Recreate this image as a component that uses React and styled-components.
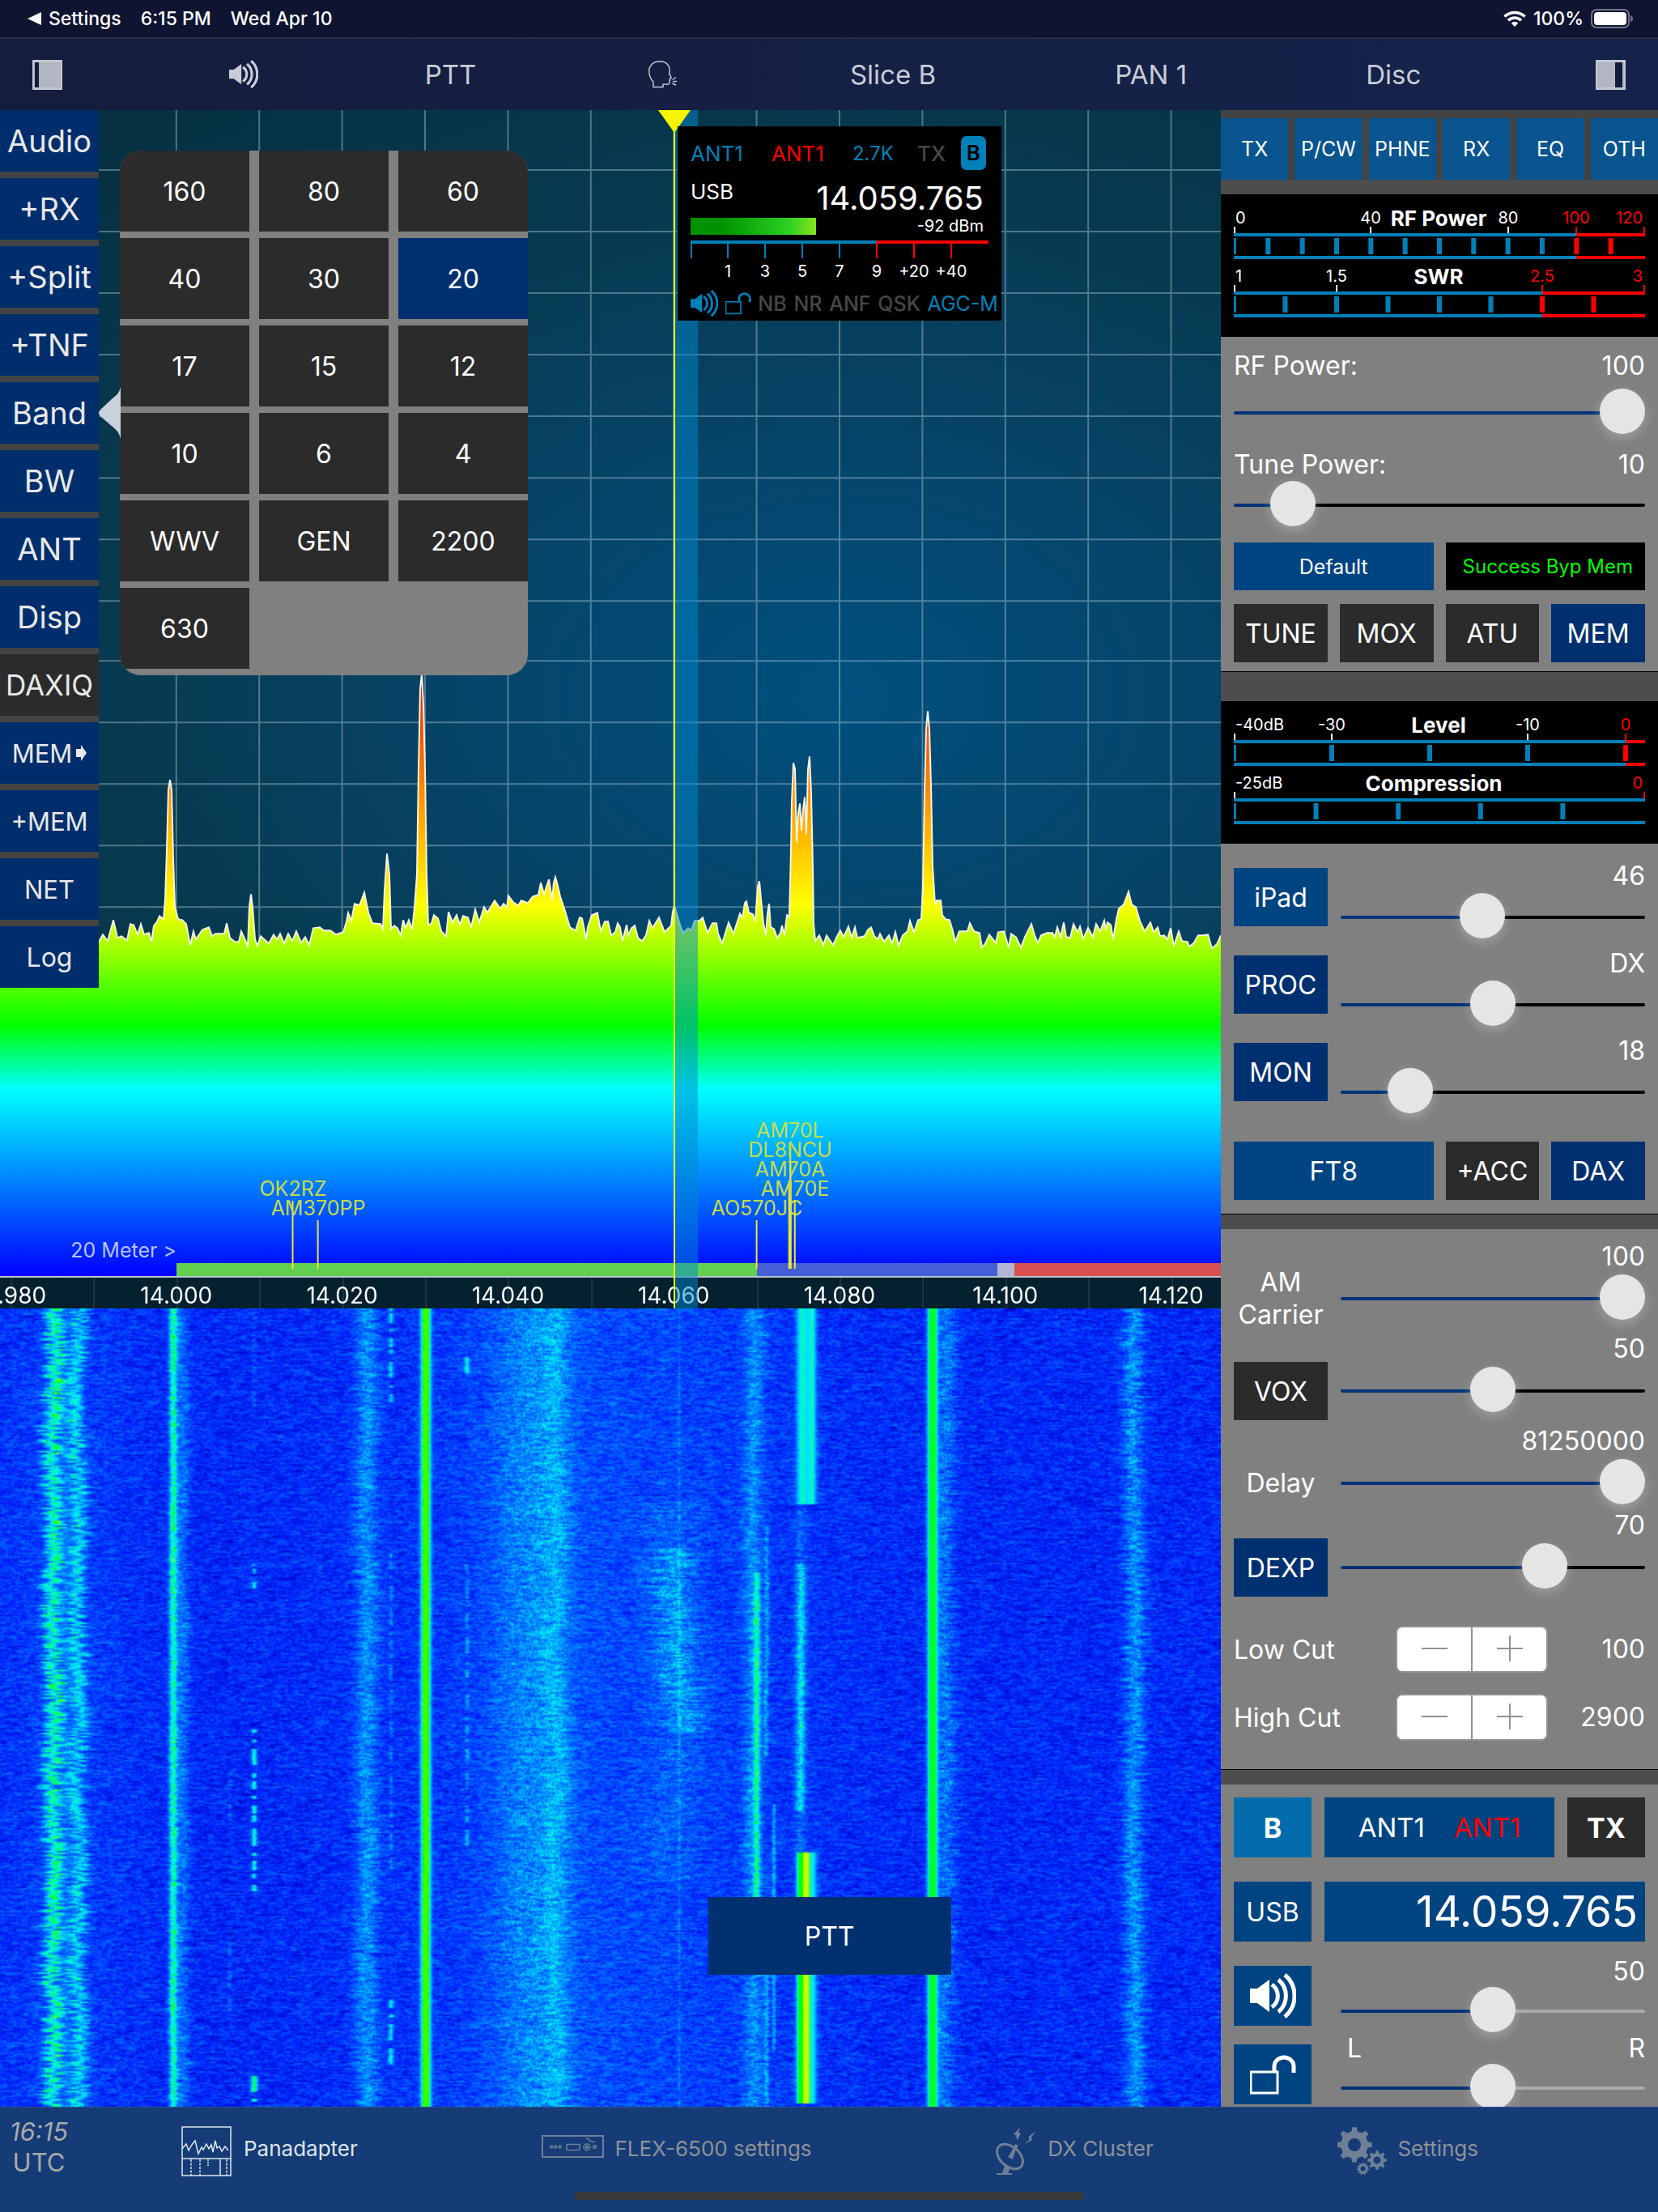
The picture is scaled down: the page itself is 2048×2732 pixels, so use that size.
import React, { useEffect, useRef, useState } from "react"
import styled, { createGlobalStyle, css } from "styled-components"

const colors = {
  navy: "#002e6c",
  blue: "#004482",
  sky: "#0080b8",
  dark: "#2b2b2b",
  panel: "#808080",
  divider: "#4d4d4d",
  red: "#ff0000",
}

const GlobalStyle = createGlobalStyle`
  * {
    box-sizing: border-box;
  }

  body {
    margin: 0;
    background: #000;
    color: #fff;
    font-family: Inter, "Liberation Sans", sans-serif;
  }

  button,
  input {
    font-family: inherit;
    margin: 0;
  }
`

const Page = styled.div`
  height: 100vh;
  display: flex;
  flex-direction: column;
  overflow: hidden;
`

/* ---------- icons ---------- */

const SpeakerIcon = ({ width = 57 }) => (
  <svg width={width} viewBox="0 0 57 56" fill="none" stroke="currentColor" strokeWidth="5" aria-hidden="true">
    <path d="M0 19h9L24 8v40L9 37H0z" fill="currentColor" stroke="none" />
    <path d="M27 14a17 17 0 0 1 0 28" />
    <path d="M35 8a26 26 0 0 1 0 40" />
    <path d="M43 2a34 34 0 0 1 0 52" />
  </svg>
)

const LockIcon = ({ width = 57 }) => (
  <svg width={width} viewBox="0 0 57 49" fill="none" stroke="currentColor" aria-hidden="true">
    <rect x="1" y="21" width="33" height="26" strokeWidth="3" />
    <path d="M30 21V14a12 11 0 0 1 24 0v8" strokeWidth="5" />
  </svg>
)

const HeadIcon = () => (
  <svg width="36" viewBox="0 0 36 34" fill="none" stroke="currentColor" strokeWidth="1.4" aria-hidden="true">
    <path d="M6 32.500V26C2 22 .8 18 .8 13 .8 5.500 6.500.8 14 .8c8 0 12.500 5 12.200 12l-.6 3 2.400 4.600c.3.800 0 1.200-1 1.400l-.8.300.4 2-.8 1.200.2 1.600c0 2-1.800 2.500-4.600 2.200L18 29v3.500z" />
    <path d="M29.500 23.500l4.500-3M30 25.800l5-.4M29.500 28l4.500 2" />
  </svg>
)

const PanelIcon = ({ right }) => (
  <svg width="37" viewBox="0 0 37 37" aria-hidden="true">
    <rect width="37" height="37" fill="#c4c7d1" />
    <rect x="2" y="3" width="33" height="31" fill="#b2b6c3" />
    <rect x={right ? 24 : 3} y="3" width={right ? 9 : 5} height="31" fill="#101b40" />
  </svg>
)

const WifiIcon = () => (
  <svg width="28" viewBox="0 0 28 20" fill="none" stroke="#fff" strokeWidth="3.600" aria-hidden="true">
    <path d="M1.500 7.500a18 18 0 0 1 25 0" />
    <path d="M6 12.300a11.500 11.500 0 0 1 16 0" />
    <path d="M14 20l-4.300-4.600a6.500 6.500 0 0 1 8.600 0z" fill="#fff" stroke="none" />
  </svg>
)

const BatteryIcon = () => (
  <svg width="53" viewBox="0 0 53 24" aria-hidden="true">
    <rect x="1" y="1" width="46" height="22" rx="6" fill="none" stroke="#71748a" strokeWidth="2" />
    <rect x="4" y="4" width="40" height="16" rx="4" fill="#fff" />
    <path d="M49 8c4 1 4 7 0 8z" fill="#71748a" />
  </svg>
)

const ArrowIcon = () => (
  <svg width="13" viewBox="0 0 13 20" fill="currentColor" aria-hidden="true">
    <path d="M0 5h6V0l7 10-7 10v-5H0z" />
  </svg>
)

const PanadapterIcon = () => (
  <svg width="62" viewBox="0 0 62 62" fill="none" stroke="currentColor" strokeWidth="1.500" aria-hidden="true">
    <rect x="1" y="1" width="60" height="60" />
    <path d="M1 40h60" />
    <path d="M1 28l5-6 3 8 4-7 4-5 4 16 4-8 2 3 4-7 3 6 3-5 2 9 3-14 2 9 3-2 3 6 4-6 4 5" />
    <path d="M12 41v20M23 41v20M56 41v20" strokeDasharray="3 1.500" />
    <path d="M33 41v8" strokeDasharray="2 1" />
    <path d="M48 41v20" />
  </svg>
)

const RigIcon = () => (
  <svg width="77" viewBox="0 0 77 40" fill="none" stroke="currentColor" strokeWidth="1.500" aria-hidden="true">
    <rect x="1" y="1" width="75" height="26" strokeWidth="2" />
    <circle cx="12" cy="14.500" r="1.500" />
    <circle cx="17" cy="14.500" r="1.500" />
    <circle cx="22.500" cy="14.500" r="1.500" />
    <rect x="31" y="11.500" width="16" height="7" />
    <circle cx="56" cy="15" r="4" />
    <circle cx="56" cy="15" r="1.500" fill="currentColor" />
    <path d="M64 13h3v3h-3zM55 4l3 1 3 3 5 .5" />
  </svg>
)

const DishIcon = () => (
  <svg width="51" viewBox="0 0 51 60" fill="none" stroke="currentColor" strokeWidth="3" aria-hidden="true">
    <ellipse cx="17.500" cy="36.500" rx="18.500" ry="12" transform="rotate(42 17.500 36.500)" />
    <path d="M26 22L18 37" strokeWidth="4" />
    <path d="M15 37l8-9 1 3-3 9z" fill="currentColor" stroke="none" />
    <path d="M11 47l2 1c3 1.500 4 1.500 5 1.500l-2.500 7.500H20v2H1v-2h7z" fill="currentColor" stroke="none" />
    <path d="M30.500 0l-8.500 9 3.500 1.500L26 17l5-9-3-1z" fill="currentColor" stroke="none" />
    <path d="M50 5l-9.500 7 1 3.500-6 6 9-5.500-.5-3.500z" fill="currentColor" stroke="none" />
  </svg>
)

const gearPath = (cx, cy, outer, inner, hole, teeth) => {
  const points = []
  for (let i = 0; i < teeth; i++) {
    ;[[-0.28, inner], [-0.15, outer], [0.15, outer], [0.28, inner]].forEach(([t, r]) => {
      const a = ((i + t) / teeth) * Math.PI * 2
      points.push(`${(cx + r * Math.sin(a)).toFixed(1)} ${(cy - r * Math.cos(a)).toFixed(1)}`)
    })
  }
  return `M${points.join("L")}zM${cx - hole} ${cy}a${hole} ${hole} 0 1 0 ${hole * 2} 0a${hole} ${hole} 0 1 0 ${-hole * 2} 0z`
}

const GearsIcon = () => (
  <svg width="61" viewBox="0 0 61 60" fill="currentColor" fillRule="evenodd" aria-hidden="true">
    <path d={gearPath(21, 22, 22, 17, 8, 8)} />
    <path d={gearPath(49, 41, 12, 9, 4.5, 8)} />
    <path d={gearPath(31.5, 51.5, 8, 6, 3, 11)} />
  </svg>
)

/* ---------- status bar and toolbar ---------- */

const StatusBar = styled.header`
  height: 48px;
  flex: none;
  padding: 0 30px 0 34px;
  display: flex;
  align-items: center;
  gap: 24px;
  background: #0f1430;
  border-bottom: 2px solid #2b2d47;
  font-size: 23px;
  font-weight: 500;
`

const StatusRight = styled.div`
  margin-left: auto;
  display: flex;
  align-items: center;
  gap: 9px;
`

const BackLink = styled.a`
  color: inherit;
  text-decoration: none;
  display: flex;
  align-items: center;
  gap: 9px;
`

const Toolbar = styled.nav`
  height: 88px;
  flex: none;
  padding: 0 40px;
  display: grid;
  grid-template-columns: auto 450fr auto 464fr auto 534fr auto 254fr;
  align-items: center;
  justify-items: center;
  background: linear-gradient(90deg, #141d3d, #15224a 90%);
`

const ToolButton = styled.button`
  padding: 0;
  border: 0;
  background: none;
  color: #c9ccd6;
  font-size: 33px;
  line-height: 40px;
  display: flex;
  align-items: center;

  &:last-child {
    justify-self: end;
  }
`

/* ---------- panadapter ---------- */

const Main = styled.main`
  flex: 1;
  min-height: 0;
  display: grid;
  grid-template-columns: minmax(0, 1fr) 540px;
`

const Panadapter = styled.section`
  position: relative;
  min-height: 0;
  display: grid;
  grid-template-rows: minmax(0, 19fr) 40px minmax(0, 13fr);
`

const Spectrum = styled.div`
  position: relative;
  min-height: 0;
  display: flex;
  flex-direction: column;
  justify-content: flex-end;
  background: radial-gradient(ellipse at 69% 50%, #00507f 0%, #064468 32%, #073a50 60%, #052e3e 100%);
`

const Plot = styled.svg`
  position: absolute;
  inset: 0;
  width: 100%;
  height: 100%;
`

const BandName = styled.div`
  position: relative;
  width: 218px;
  text-align: right;
  font-size: 25px;
  line-height: 32px;
  color: #b7c3f2;
`

const BandPlan = styled.div`
  position: relative;
  display: flex;
  height: 16px;
`

const BandSegment = styled.div`
  flex: ${p => p.$span};
  background: ${p => p.$color};
`

const Spot = styled.div`
  position: absolute;
  bottom: 9px;
  transform: translateX(-50%);
  display: flex;
  flex-direction: column;
  align-items: center;
  gap: 3px;
  color: #c6dc46;
  font-size: 25px;
  line-height: 24px;

  &::after {
    content: "";
    width: ${p => (p.$wide ? 4 : 2)}px;
    height: ${p => 60 + p.$level * 24}px;
    background: #e6e632;
  }
`

const Axis = styled.div`
  position: relative;
  overflow: hidden;
  border-top: 2px solid #b9c2cc;
  background: #05202e;
`

const AxisLabel = styled.span`
  position: absolute;
  transform: translateX(-50%);
  font-size: 28px;
  line-height: 44px;
`

const AxisTick = styled.span`
  position: absolute;
  width: 2px;
  height: 100%;
  background: #1c3544;
`

const WaterfallCanvas = styled.canvas`
  display: block;
  width: 100%;
  height: 100%;
  min-height: 0;
`

const SliceOverlay = styled.div`
  position: absolute;
  top: 0;
  left: 55.2%;
  width: 30px;
  height: 60%;
  background: rgba(0, 135, 205, 0.5);
  border-left: 2px solid #f6f600;

  &::before {
    content: "";
    position: absolute;
    top: 0;
    left: -21px;
    border: 20px solid transparent;
    border-top: 28px solid #f6f600;
    border-bottom: 0;
  }
`

const PttButton = styled.button`
  position: absolute;
  left: 58%;
  bottom: 163px;
  width: 300px;
  height: 96px;
  border: 0;
  background: #003070;
  color: #fff;
  font-size: 32px;
`

const SideMenu = styled.nav`
  position: absolute;
  top: 0;
  left: 0;
  width: 122px;
  display: flex;
  flex-direction: column;
  gap: 8px;
  background: #434343;
`

const SideButton = styled.button`
  height: 76px;
  padding: 0;
  border: 0;
  display: flex;
  align-items: center;
  justify-content: center;
  gap: 5px;
  white-space: nowrap;
  background: ${p => (p.$off ? colors.dark : colors.navy)};
  color: #e8e8e8;
  font-size: ${p => p.$size || 38}px;
`

const BandPopover = styled.div`
  position: absolute;
  top: 50px;
  left: 148px;
  width: 504px;
`

const BandGrid = styled.div`
  padding-bottom: 8px;
  display: grid;
  grid-template-columns: repeat(3, 1fr);
  gap: 8px 12px;
  background: ${colors.panel};
  border-radius: 26px;
  overflow: hidden;
`

const PopoverArrow = styled.svg`
  position: absolute;
  top: 292px;
  left: -26px;
`

const BandButton = styled.button`
  height: 100px;
  border: 0;
  background: ${p => (p.$active ? "#003070" : colors.dark)};
  color: #fff;
  font-size: 32px;
`

/* ---------- slice flag ---------- */

const Flag = styled.div`
  position: absolute;
  top: 20px;
  left: 55.5%;
  width: 400px;
  height: 240px;
  padding: 10px 16px 0;
  background: #000;
  font-size: 26px;
`

const FlagTop = styled.div`
  display: grid;
  grid-template-columns: 100px 100px 80px 1fr 31px;
  align-items: center;
  height: 46px;
  padding-right: 3px;
  color: ${colors.sky};
`

const FlagMiddle = styled.div`
  display: flex;
  justify-content: space-between;
  padding-right: 6px;
  line-height: 50px;
`

const FlagFreq = styled.span`
  font-size: 40px;
  line-height: 66px;
`

const FlagLevel = styled.div`
  display: flex;
  align-items: center;
  justify-content: space-between;
  height: 22px;
  margin: -10px 6px 5px 0;
  font-size: 20px;

  &::before {
    content: "";
    width: 155px;
    height: 21px;
    background: linear-gradient(90deg, #009200 25%, #2ad022 78%, #86e41c);
  }
`

const FlagBottom = styled.div`
  display: flex;
  align-items: center;
  justify-content: space-between;
  height: 40px;
  margin: 6px -12px 0 0;
  color: ${colors.sky};
  font-size: 25px;
`

const Muted = styled.span`
  color: #474747;
  font-weight: 500;
`

const RedText = styled.span`
  color: ${colors.red};
`

const SmallText = styled.span`
  font-size: 24px;
`

const SliceBadge = styled.span`
  height: 42px;
  border-radius: 7px;
  background: ${colors.sky};
  color: #000;
  font-weight: 600;
  line-height: 42px;
  text-align: center;
`

/* ---------- right panel ---------- */

const Panel = styled.aside`
  min-height: 0;
  overflow: hidden;
  background: ${colors.divider};
`

const TabRow = styled.div`
  display: grid;
  grid-template-columns: repeat(6, 1fr);
  gap: 8px;
  padding-top: 10px;
  margin-bottom: 18px;
  background: #434343;
`

const TabButton = styled.button`
  height: 76px;
  padding: 0;
  border: 0;
  background: #0a5590;
  color: #fff;
  font-size: 25px;
`

const Meters = styled.div`
  height: 176px;
  padding: 8px 16px 0;
  background: #000;
`

const MeterSvg = styled.svg`
  display: block;
  width: 100%;
  overflow: visible;

  text {
    font-size: 20px;
    fill: #fff;
  }

  text.title {
    font-size: 26px;
    font-weight: 700;
  }

  text.red {
    fill: ${colors.red};
  }
`

const Card = styled.div`
  padding: ${p => p.$pad};
  background: ${colors.panel};
  border-bottom: 1px solid #000;
  margin-bottom: ${p => p.$after || 18}px;
  font-size: 32px;
`

const Field = styled.div`
  margin-top: ${p => p.$top || 0}px;
`

const FieldHead = styled.div`
  display: flex;
  justify-content: space-between;
  line-height: 36px;
  margin-bottom: ${p => p.$gap}px;
`

const ButtonGrid = styled.div`
  display: grid;
  grid-template-columns: repeat(4, 1fr);
  gap: 15px;
  margin-top: ${p => p.$top}px;
`

const kinds = {
  off: colors.dark,
  on: "#003070",
  blue: colors.blue,
  slice: "#006cac",
}

const PanelButton = styled.button`
  height: ${p => p.$height || 72}px;
  padding: 0;
  border: 0;
  display: flex;
  align-items: center;
  justify-content: center;
  background: ${p => kinds[p.$kind || "off"]};
  color: #fff;
  font-size: ${p => p.$size || 32}px;
  ${p =>
    p.$wide &&
    css`
      grid-column: span 2;
    `}
`

const AtuStatus = styled.output`
  grid-column: span 2;
  padding-right: 15px;
  background: #000;
  color: #00ff00;
  font-size: 24px;
  line-height: 59px;
  text-align: right;
  white-space: nowrap;
`

/* button on the left, value above its slider on the right */
const LevelRow = styled.div`
  display: grid;
  grid-template-columns: 116px 1fr;
  gap: 16px;
  align-items: start;
  margin-bottom: 13px;

  > button {
    margin-top: 6px;
  }
`

const LevelSide = styled.div`
  display: flex;
  flex-direction: column;
  gap: ${p => (p.$tight ? 5 : 7)}px;
`

const Value = styled.output`
  line-height: 32px;
  text-align: right;
`

/* value on a line of its own, button or label centred on the slider */
const VoxRow = styled.div`
  display: grid;
  grid-template-columns: 116px 1fr;
  grid-template-rows: 32px 72px;
  column-gap: 16px;
  align-items: center;
  margin-top: ${p => p.$top || 0}px;

  > output {
    grid-column: 1 / -1;
  }
`

const RowLabel = styled.span`
  text-align: center;
  line-height: 40px;
`

const CutRow = styled.div`
  display: grid;
  grid-template-columns: 200px 188px 1fr;
  align-items: center;
  margin-top: ${p => p.$top}px;
`

const Stepper = styled.div`
  display: flex;
  height: 58px;
  border: 2px solid #929292;
  border-radius: 8px;
  background: #fff;
`

const StepButton = styled.button`
  flex: 1;
  padding: 0;
  border: 0;
  background: none;
  color: #929292;

  & + & {
    border-left: 2px solid #929292;
  }
`

const SliceTop = styled.div`
  display: grid;
  grid-template-columns: 96px 1fr 96px;
  gap: 16px;
`

const AntButton = styled(PanelButton)`
  gap: 36px;
`

const SliceRow = styled.div`
  display: grid;
  grid-template-columns: 96px 1fr;
  gap: 16px;
  margin-top: ${p => p.$top}px;

  > ${LevelSide} {
    margin-left: 20px;
  }
`

const SliceButton = styled(PanelButton)`
  margin-top: ${p => p.$drop || 0}px;
`

const FreqButton = styled(PanelButton)`
  justify-content: flex-end;
  padding-right: 9px;
`

const PanHead = styled.div`
  display: flex;
  justify-content: space-between;
  padding-left: 8px;
  line-height: 32px;
`

const Range = styled.input`
  appearance: none;
  display: block;
  width: 100%;
  height: 56px;
  background: none;

  &::-webkit-slider-runnable-track {
    height: 4px;
    border-radius: 2px;
    background: linear-gradient(90deg, #003277 ${p => p.value}%, ${p => p.$rest || "#000"} ${p => p.value}%);
  }

  &::-webkit-slider-thumb {
    appearance: none;
    width: 56px;
    height: 56px;
    margin-top: -28px;
    border-radius: 50%;
    background: #e5e5e5;
    box-shadow: 0 5px 14px rgba(235, 235, 235, 0.3);
  }
`

/* ---------- tab bar ---------- */

const TabBar = styled.footer`
  position: relative;
  height: 130px;
  flex: none;
  display: flex;
  align-items: flex-start;
  background: #153c76;
  border-top: 1px solid #2c5083;
`

const Clock = styled.div`
  width: 92px;
  flex: none;
  padding: 11px 0 0 4px;
  color: #a9a9a9;
  font-size: 31px;
  line-height: 38px;
  text-align: center;
`

const ClockTime = styled.time`
  display: block;
  font-style: italic;
`

const Tabs = styled.nav`
  flex: 1;
  display: flex;
  justify-content: space-between;
  padding: 22px 222px 0 132px;
`

const TabLink = styled.a`
  display: flex;
  align-items: center;
  gap: ${p => (p.$active ? 15 : 13)}px;
  height: 64px;
  color: ${p => (p.$active ? "#dfe5ee" : "#6f7f96")};
  text-decoration: none;
  font-size: 26px;

  span {
    padding-bottom: 8px;
    color: ${p => (p.$active ? "#dfe5ee" : "#8f9297")};
  }
`

const HomeBar = styled.div`
  position: absolute;
  bottom: 15px;
  left: 50%;
  transform: translateX(-50%);
  width: 630px;
  height: 10px;
  border-radius: 5px;
  background: #3a3a3a;
`

/* ---------- data ---------- */

const sideItems = [
  ["Audio"],
  ["+RX"],
  ["+Split"],
  ["+TNF"],
  ["Band"],
  ["BW"],
  ["ANT"],
  ["Disp"],
  ["DAXIQ", 35],
  ["MEM", 31],
  ["+MEM", 31],
  ["NET", 31],
  ["Log", 32],
]

const bands = ["160", "80", "60", "40", "30", "20", "17", "15", "12", "10", "6", "4", "WWV", "GEN", "2200", "630"]

const spots = [
  { call: "OK2RZ", x: 362, level: 1 },
  { call: "AM370PP", x: 393, level: 0 },
  { call: "AO570JC", x: 935, level: 0 },
  { call: "AM70L", x: 976, level: 4 },
  { call: "DL8NCU", x: 976, level: 3 },
  { call: "AM70A", x: 976, level: 2, wide: true },
  { call: "AM70E", x: 982, level: 1 },
]

const bandPlan = [
  [218, "transparent"],
  [717, "#62d04f"],
  [297, "#4560d6"],
  [21, "#b4b4d6"],
  [255, "#d84f50"],
]

const freqLabels = ["13.980", "14.000", "14.020", "14.040", "14.060", "14.080", "14.100", "14.120"]

const gridX = Array.from({ length: 15 }, (_, i) => 13 + i * 102.4)
const gridY = [210, 286, 362, 438, 514, 590, 666, 742, 816, 892, 968, 1044, 1120]

const trace = `0,1160 60,1150 122,1163 127,1154 133,1162 140,1136 145,1158 150,1156 157,1161 161,1141 165,1142 170,1154 174,1141
178,1154 184,1152 187,1163 190,1143 194,1138 197,1131 202,1135 204,1110 206,1050 208,975 210,963 212,975 214,1060 216,1120
220,1135 225,1136 230,1141 235,1167 239,1150 242,1160 250,1148 258,1145 262,1156 266,1153 277,1153 280,1140 284,1158
290,1163 295,1163 298,1150 304,1163 306,1170 308,1120 310,1104 312,1120 315,1160 318,1168 322,1156 332,1165 338,1154
342,1160 346,1153 351,1165 356,1153 361,1162 366,1150 372,1164 377,1157 382,1167 387,1146 395,1145 400,1149 408,1149
415,1154 424,1151 428,1138 430,1127 434,1137 438,1116 444,1118 450,1102 455,1127 460,1140 470,1141 473,1147 475,1100
478,1054 481,1080 483,1147 487,1143 491,1146 495,1155 498,1136 501,1146 505,1136 509,1148 512,1120 515,1080 517,950
519,850 521,832 523,870 525,950 527,1080 529,1142 533,1140 536,1130 541,1134 545,1150 551,1156 554,1126 559,1139
564,1130 568,1142 572,1131 578,1133 582,1145 587,1123 592,1139 598,1120 602,1127 611,1112 618,1122 622,1116 626,1120
628,1106 634,1114 640,1118 644,1112 652,1115 658,1107 665,1105 668,1090 672,1104 678,1086 680,1098 682,1112 684,1090
686,1083 688,1090 692,1107 698,1125 704,1145 711,1149 716,1133 719,1134 724,1160 726,1145 731,1130 738,1127 742,1150
747,1138 751,1138 755,1155 760,1151 763,1140 766,1145 769,1162 774,1142 776,1155 780,1146 784,1143 788,1158 793,1162
798,1155 802,1137 806,1146 814,1133 821,1151 829,1143 831,1126 833,1118 835,1125 840,1142 844,1152 850,1146 854,1149
858,1137 864,1137 868,1133 874,1152 880,1140 885,1140 887,1153 892,1165 900,1139 906,1153 914,1128 917,1133 920,1115
922,1113 925,1127 930,1129 933,1138 936,1095 938,1088 940,1110 943,1140 946,1155 948,1128 950,1116 952,1145 956,1147
960,1158 964,1152 966,1143 969,1155 972,1130 975,1132 977,1050 978,990 980,942 982,950 984,1040 986,1005 988,992
990,1026 992,1000 994,984 996,1030 998,950 1000,934 1002,980 1004,1070 1005,1140 1007,1162 1012,1155 1017,1167
1021,1155 1029,1167 1034,1156 1038,1149 1042,1157 1048,1144 1052,1158 1056,1145 1059,1158 1068,1156 1072,1148
1076,1145 1080,1156 1084,1160 1087,1153 1092,1163 1098,1155 1102,1165 1106,1151 1110,1168 1115,1155 1121,1150
1124,1137 1129,1151 1134,1136 1138,1135 1140,1095 1142,980 1144,900 1146,878 1148,900 1150,970 1152,1070 1155,1117
1157,1112 1162,1112 1164,1130 1168,1135 1173,1136 1177,1150 1180,1163 1185,1150 1195,1150 1198,1140 1203,1150
1210,1152 1213,1170 1217,1165 1222,1154 1230,1164 1233,1151 1240,1150 1246,1170 1249,1153 1255,1157 1261,1170
1266,1157 1274,1141 1278,1155 1282,1164 1286,1155 1293,1152 1300,1152 1303,1157 1306,1145 1310,1157 1314,1139
1317,1157 1322,1158 1326,1141 1331,1151 1334,1144 1338,1159 1344,1146 1350,1157 1354,1141 1359,1150 1364,1137
1366,1148 1368,1139 1372,1142 1375,1160 1379,1135 1382,1122 1388,1117 1394,1101 1398,1117 1403,1120 1408,1137
1414,1150 1421,1139 1425,1151 1430,1145 1433,1156 1438,1155 1442,1160 1446,1146 1450,1168 1456,1150 1460,1162
1467,1163 1469,1169 1475,1164 1480,1155 1486,1155 1492,1154 1497,1171 1503,1166 1508,1155`

/* ---------- waterfall ---------- */

// x and width in canvas columns, from/to as a share of the height
const signals = [
  { x: 32, width: 4.5, level: 0.56, wander: 6, fuzz: 0.35 },
  { x: 48, width: 4, level: 0.42, wander: 6, fuzz: 0.4 },
  { x: 40, width: 9, level: 0.14, wander: 4, fuzz: 0.4 },
  { x: 106.5, width: 2.4, level: 0.56, wander: 0.5, fuzz: 0.08 },
  { x: 112, width: 4, level: 0.26, wander: 3, fuzz: 0.5 },
  { x: 226, width: 7, level: 0.32, wander: 4, fuzz: 0.5 },
  { x: 262.5, width: 3.6, level: 0.42, wander: 0.3, fuzz: 0.05, flat: true },
  { x: 262.5, width: 2.2, level: 0.76, wander: 0.3, fuzz: 0.02, flat: true },
  { x: 328, width: 24, level: 0.26, wander: 4, fuzz: 0.7 },
  { x: 343, width: 7, level: 0.22, wander: 6, fuzz: 0.6 },
  { x: 419, width: 1, level: 0.16, wander: 0, fuzz: 0.7 },
  { x: 418, width: 9, level: 0.26, wander: 12, fuzz: 0.7, from: 0.3, to: 0.53 },
  { x: 416, width: 16, level: 0.14, wander: 14, fuzz: 0.9, from: 0.24, to: 0.72 },
  { x: 465, width: 6, level: 0.28, wander: 3, fuzz: 0.5 },
  { x: 467, width: 1.8, level: 0.42, wander: 0.3, fuzz: 0.2, from: 0.33, to: 0.79 },
  { x: 473, width: 1.4, level: 0.3, wander: 1, fuzz: 0.5, from: 0.27, to: 0.56 },
  { x: 473, width: 1.4, level: 0.3, wander: 1, fuzz: 0.4, from: 0.83, to: 1 },
  { x: 477.5, width: 1, level: 0.35, wander: 0, fuzz: 0.3, from: 0.62, to: 0.93 },
  { x: 497.5, width: 6, level: 0.46, wander: 0.3, fuzz: 0.1, to: 0.245, flat: true },
  { x: 495, width: 1.2, level: 0.16, wander: 0.2, fuzz: 0.3, to: 0.245 },
  { x: 501, width: 1.2, level: 0.16, wander: 0.2, fuzz: 0.3, to: 0.245 },
  { x: 494, width: 2.6, level: 0.36, wander: 1, fuzz: 0.4, from: 0.32, to: 0.63 },
  { x: 494, width: 4, level: 0.18, wander: 2, fuzz: 0.6, from: 0.25, to: 0.68 },
  { x: 497.5, width: 6, level: 0.5, wander: 0.3, fuzz: 0.06, from: 0.68, to: 0.995, flat: true },
  { x: 494.5, width: 2.5, level: 0.7, wander: 0, fuzz: 0.02, from: 0.68, to: 0.995, flat: true },
  { x: 497.5, width: 2, level: 0.82, wander: 0, fuzz: 0.02, from: 0.68, to: 0.995, flat: true },
  { x: 583, width: 6, level: 0.3, wander: 5, fuzz: 0.6 },
  { x: 575.5, width: 3.6, level: 0.42, wander: 0.3, fuzz: 0.05, flat: true },
  { x: 575.5, width: 2.2, level: 0.7, wander: 0.2, fuzz: 0.02, flat: true },
  { x: 700, width: 6, level: 0.36, wander: 4.5, fuzz: 0.5 },
  { x: 156.5, width: 1.2, level: 0.16, fuzz: 0.4, to: 0.13, dash: true },
  { x: 156.5, width: 1.4, level: 0.48, fuzz: 0.2, from: 0.32, to: 0.35, dash: true },
  { x: 156.5, width: 1.6, level: 0.54, fuzz: 0.1, from: 0.527, to: 0.73, dash: true },
  { x: 156.5, width: 2, level: 0.66, fuzz: 0.1, from: 0.96, to: 1, dash: true },
  { x: 241, width: 1.5, level: 0.42, fuzz: 0.2, from: 0, to: 0.12, dash: true },
  { x: 241, width: 1.2, level: 0.24, fuzz: 0.4, from: 0.3, to: 0.7, dash: true },
  { x: 241, width: 1.6, level: 0.46, fuzz: 0.1, from: 0.865, to: 0.95, dash: true },
  { x: 288, width: 1.7, level: 0.4, fuzz: 0.2, from: 0.06, to: 0.08 },
  { x: 288, width: 1.2, level: 0.28, fuzz: 0.4, from: 0.32, to: 0.68, dash: true },
  { x: 141.5, width: 1, level: 0.18, fuzz: 0.3, from: 0.58, to: 0.64, dash: true },
  { x: 141.5, width: 1, level: 0.18, fuzz: 0.3, from: 0.79, to: 0.89, dash: true },
]

const palette = [
  [0, [0, 0, 190]],
  [0.2, [0, 40, 255]],
  [0.4, [0, 120, 255]],
  [0.62, [0, 225, 255]],
  [0.74, [0, 255, 190]],
  [0.9, [0, 255, 0]],
  [1, [225, 255, 0]],
]

const toColor = level => {
  const v = Math.max(0, Math.min(1, level))
  const i = Math.max(1, palette.findIndex(([stop]) => v <= stop))
  const [s0, c0] = palette[i - 1]
  const [s1, c1] = palette[i]
  const t = (v - s0) / (s1 - s0)
  return c0.map((c, k) => c + (c1[k] - c) * t)
}

const createRandom = seed => () => {
  seed = (seed * 1664525 + 1013904223) >>> 0
  return (seed >>> 8) / 16777216
}

const drawWaterfall = canvas => {
  const { width, height } = canvas
  const context = canvas.getContext("2d")
  const image = context.createImageData(width, height)
  const random = createRandom(14059)

  for (let y = 0; y < height; y++) {
    const row = new Float32Array(width)
    let smear = 0.5
    for (let x = 0; x < width; x++) {
      smear = smear * 0.55 + random() * 0.45
      const haze = 0.09 * Math.exp(-(((x - 370) / 120) ** 2)) + 0.06 * Math.exp(-(((x - 40) / 45) ** 2))
      row[x] = 0.19 + haze + (smear - 0.5) * 0.42
    }
    signals.forEach((s, n) => {
      const at = y / height
      if (at < (s.from || 0) || at > (s.to || 1)) return
      if (s.dash && Math.sin(y * 0.9 + n) + Math.sin(y * 0.37) < -0.2) return
      const drift = (random() - 0.5) * 1.3 + Math.sin(y / (17 + n) + n) * 0.2
      const centre = s.x + drift * (s.wander || 0)
      const reach = Math.ceil(s.width * 2.5)
      for (let x = Math.max(0, Math.floor(centre - reach)); x < Math.min(width, centre + reach); x++) {
        const d = Math.abs(x - centre) / s.width
        const shape = s.flat ? 1 / (1 + d ** 8) : Math.exp(-d * d)
        const gain = s.level * (1 - s.fuzz * random())
        row[x] = s.flat ? row[x] * (1 - shape) + (gain + 0.18) * shape : row[x] + gain * shape
      }
    })
    for (let x = 0; x < width; x++) {
      const [r, g, b] = toColor(row[x])
      image.data.set([r, g, b, 255], (y * width + x) * 4)
    }
  }
  context.putImageData(image, 0, 0)
}

const Waterfall = () => {
  const ref = useRef(null)
  useEffect(() => drawWaterfall(ref.current), [])
  return <WaterfallCanvas ref={ref} width={754} height={493} />
}

/* ---------- components ---------- */

const Slider = ({ label, initial, rest }) => {
  const [value, setValue] = useState(initial)
  return <Range type="range" aria-label={label} value={value} $rest={rest} onChange={e => setValue(e.target.value)} />
}

const Meter = ({ title, titleX = 253, step, count, redFrom = 508, labels }) => (
  <MeterSvg viewBox="0 0 508 72" role="img" aria-label={title}>
    <text className="title" x={titleX} y="31" textAnchor="middle">
      {title}
    </text>
    {labels.map(([text, x, red]) => (
      <React.Fragment key={text}>
        <text
          className={red ? "red" : undefined}
          x={x === 0 ? 2 : x === 508 ? 505 : x}
          y="28"
          textAnchor={x === 0 ? "start" : x === 508 ? "end" : "middle"}
        >
          {text}
        </text>
        <path d={`M${Math.min(507, Math.max(1, x))} 32v8`} stroke={red ? colors.red : "#fff"} strokeWidth="2" />
      </React.Fragment>
    ))}
    <path d={`M0 42H${redFrom}M0 70H${redFrom}`} stroke={colors.sky} strokeWidth="4" />
    <path d={`M${redFrom} 42H508M${redFrom} 70H508`} stroke={colors.red} strokeWidth="4" />
    {Array.from({ length: count }, (_, i) => (
      <rect
        key={i}
        x={i === 0 ? 0 : i * step - 3}
        y="46"
        width={i === 0 ? 3 : 6}
        height="20"
        fill={i * step >= redFrom - 1 ? colors.red : colors.sky}
      />
    ))}
  </MeterSvg>
)

const SpectrumPlot = () => (
  <Plot viewBox="0 136 1508 1440" preserveAspectRatio="none" aria-hidden="true">
    <defs>
      <linearGradient id="heat" gradientUnits="userSpaceOnUse" x1="0" y1="830" x2="0" y2="1576">
        <stop offset="0" stopColor="#f01800" />
        <stop offset="0.2" stopColor="#ff8c00" />
        <stop offset="0.385" stopColor="#ffff00" />
        <stop offset="0.585" stopColor="#00ff00" />
        <stop offset="0.69" stopColor="#00ffff" />
        <stop offset="1" stopColor="#0000ff" />
      </linearGradient>
    </defs>
    <path
      d={gridX.map(x => `M${x} 136V1576`).join("") + gridY.map(y => `M0 ${y}H1508`).join("")}
      stroke="rgba(190, 210, 220, 0.4)"
      strokeWidth="2"
    />
    <polygon points={`0,1576 ${trace} 1508,1576`} fill="url(#heat)" />
    <polyline points={trace} fill="none" stroke="#f4f4e4" strokeWidth="2" />
  </Plot>
)

const flagMarks = ["", "1", "3", "5", "7", "9", "+20", "+40"]

const SliceFlag = () => (
  <Flag>
    <FlagTop>
      <span>ANT1</span>
      <RedText>ANT1</RedText>
      <SmallText>2.7K</SmallText>
      <Muted>TX</Muted>
      <SliceBadge>B</SliceBadge>
    </FlagTop>
    <FlagMiddle>
      <span>USB</span>
      <FlagFreq>14.059.765</FlagFreq>
    </FlagMiddle>
    <FlagLevel>-92 dBm</FlagLevel>
    <MeterSvg viewBox="0 0 368 54" role="img" aria-label="Signal strength">
      <path d="M0 4H230" stroke={colors.sky} strokeWidth="4" />
      <path d="M230 4H368" stroke={colors.red} strokeWidth="4" />
      {flagMarks.map((mark, i) => (
        <React.Fragment key={i}>
          <path d={`M${Math.max(1, i * 46)} 4v20`} stroke={i > 4 ? colors.red : colors.sky} strokeWidth="2" />
          <text x={i * 46} y="47" textAnchor="middle">
            {mark}
          </text>
        </React.Fragment>
      ))}
    </MeterSvg>
    <FlagBottom>
      <SpeakerIcon width={34} />
      <LockIcon width={32} />
      <Muted>NB</Muted>
      <Muted>NR</Muted>
      <Muted>ANF</Muted>
      <Muted>QSK</Muted>
      <span>AGC-M</span>
    </FlagBottom>
  </Flag>
)

const LevelControl = ({ name, kind, value, position }) => (
  <LevelRow>
    <PanelButton $kind={kind}>{name}</PanelButton>
    <LevelSide>
      <Value>{value}</Value>
      <Slider label={name} initial={position} />
    </LevelSide>
  </LevelRow>
)

const VoxControl = ({ name, kind, value, position, top }) => (
  <VoxRow $top={top}>
    <Value>{value}</Value>
    {kind ? <PanelButton $kind={kind}>{name}</PanelButton> : <RowLabel>{name}</RowLabel>}
    <Slider label={name} initial={position} />
  </VoxRow>
)

const CutControl = ({ name, value, top }) => (
  <CutRow $top={top}>
    <span>{name}</span>
    <Stepper>
      <StepButton aria-label={`Decrease ${name}`}>
        <svg width="32" height="32" stroke="currentColor" strokeWidth="2">
          <path d="M0 16h32" />
        </svg>
      </StepButton>
      <StepButton aria-label={`Increase ${name}`}>
        <svg width="32" height="32" stroke="currentColor" strokeWidth="2">
          <path d="M0 16h32M16 0v32" />
        </svg>
      </StepButton>
    </Stepper>
    <Value>{value}</Value>
  </CutRow>
)

const RightPanel = () => (
  <Panel>
    <TabRow>
      {["TX", "P/CW", "PHNE", "RX", "EQ", "OTH"].map(tab => (
        <TabButton key={tab}>{tab}</TabButton>
      ))}
    </TabRow>

    <Meters>
      <Meter
        title="RF Power"
        step={42.33}
        count={12}
        redFrom={423}
        labels={[["0", 0], ["40", 169], ["80", 339], ["100", 423, true], ["120", 508, true]]}
      />
      <Meter
        title="SWR"
        step={63.5}
        count={8}
        redFrom={381}
        labels={[["1", 0], ["1.5", 127], ["2.5", 381, true], ["3", 508, true]]}
      />
    </Meters>
    <Card $pad="18px 16px 11px" $after={36}>
      <Field>
        <FieldHead $gap={12}>
          <span>RF Power:</span>
          <span>100</span>
        </FieldHead>
        <Slider label="RF Power" initial={100} />
      </Field>
      <Field $top={18}>
        <FieldHead $gap={4}>
          <span>Tune Power:</span>
          <span>10</span>
        </FieldHead>
        <Slider label="Tune Power" initial={10} />
      </Field>
      <ButtonGrid $top={18}>
        <PanelButton $kind="blue" $wide $height={59} $size={25}>
          Default
        </PanelButton>
        <AtuStatus>Success Byp Mem</AtuStatus>
      </ButtonGrid>
      <ButtonGrid $top={17}>
        <PanelButton>TUNE</PanelButton>
        <PanelButton>MOX</PanelButton>
        <PanelButton>ATU</PanelButton>
        <PanelButton $kind="on">MEM</PanelButton>
      </ButtonGrid>
    </Card>

    <Meters>
      <Meter
        title="Level"
        step={121}
        count={5}
        redFrom={484}
        labels={[["-40dB", 0], ["-30", 121], ["-10", 363], ["0", 484, true]]}
      />
      <Meter title="Compression" titleX={247} step={101.6} count={5} labels={[["-25dB", 0], ["0", 508, true]]} />
    </Meters>
    <Card $pad="24px 16px 17px">
      <LevelControl name="iPad" kind="blue" value="46" position={46} />
      <LevelControl name="PROC" kind="on" value="DX" position={50} />
      <LevelControl name="MON" kind="on" value="18" position={18} />
      <ButtonGrid $top={33}>
        <PanelButton $kind="blue" $wide>
          FT8
        </PanelButton>
        <PanelButton>+ACC</PanelButton>
        <PanelButton $kind="on">DAX</PanelButton>
      </ButtonGrid>
    </Card>

    <Card $pad="18px 16px 35px">
      <VoxControl name="AM Carrier" value="100" position={100} />
      <VoxControl name="VOX" kind="off" value="50" position={50} top={10} />
      <VoxControl name="Delay" value="81250000" position={100} top={10} />
      <VoxControl name="DEXP" kind="on" value="70" position={70} />
      <CutControl name="Low Cut" value="100" top={36} />
      <CutControl name="High Cut" value="2900" top={26} />
    </Card>

    <Card $pad="16px">
      <SliceTop>
        <PanelButton $kind="slice" $height={74} $size={34}>
          <b>B</b>
        </PanelButton>
        <AntButton $kind="blue" $height={74} $size={33}>
          ANT1 <RedText>ANT1</RedText>
        </AntButton>
        <PanelButton $height={74} $size={34}>
          <b>TX</b>
        </PanelButton>
      </SliceTop>
      <SliceRow $top={30}>
        <PanelButton $kind="blue" $height={74}>
          USB
        </PanelButton>
        <FreqButton $kind="blue" $height={74} $size={53}>
          14.059.765
        </FreqButton>
      </SliceRow>
      <SliceRow $top={21}>
        <SliceButton $kind="blue" $height={74} $drop={9} aria-label="Mute">
          <SpeakerIcon />
        </SliceButton>
        <LevelSide $tight>
          <Value>50</Value>
          <Slider label="Volume" initial={50} rest="#a9a9a9" />
        </LevelSide>
      </SliceRow>
      <SliceRow $top={2}>
        <SliceButton $kind="blue" $height={74} $drop={11} aria-label="Lock">
          <LockIcon />
        </SliceButton>
        <LevelSide $tight>
          <PanHead>
            <span>L</span>
            <span>R</span>
          </PanHead>
          <Slider label="Pan" initial={50} rest="#a9a9a9" />
        </LevelSide>
      </SliceRow>
    </Card>
  </Panel>
)

const App = () => (
  <Page>
    <GlobalStyle />
    <StatusBar>
      <BackLink href="#settings">
        <svg width="17" height="16" fill="#fff" aria-hidden="true">
          <path d="M17 0v16L0 8z" />
        </svg>
        Settings
      </BackLink>
      <span>6:15 PM</span>
      <span>Wed Apr 10</span>
      <StatusRight>
        <WifiIcon />
        <span>100%</span>
        <BatteryIcon />
      </StatusRight>
    </StatusBar>

    <Toolbar>
      <ToolButton aria-label="Left panel">
        <PanelIcon />
      </ToolButton>
      <ToolButton aria-label="Sound">
        <SpeakerIcon width={36} />
      </ToolButton>
      <ToolButton>PTT</ToolButton>
      <ToolButton aria-label="Voice">
        <HeadIcon />
      </ToolButton>
      <ToolButton>Slice B</ToolButton>
      <ToolButton>PAN 1</ToolButton>
      <ToolButton>Disc</ToolButton>
      <ToolButton aria-label="Right panel">
        <PanelIcon right />
      </ToolButton>
    </Toolbar>

    <Main>
      <Panadapter>
        <Spectrum>
          <SpectrumPlot />
          <BandName>20 Meter &gt;</BandName>
          <BandPlan>
            {bandPlan.map(([span, color]) => (
              <BandSegment key={span} $span={span} $color={color} />
            ))}
          </BandPlan>
          {spots.map(spot => (
            <Spot key={spot.call} $level={spot.level} $wide={spot.wide} style={{ left: `${(spot.x / 1508) * 100}%` }}>
              {spot.call}
            </Spot>
          ))}
        </Spectrum>
        <Axis>
          {gridX.map(x => (
            <AxisTick key={x} style={{ left: `${(x / 1508) * 100}%` }} />
          ))}
          {freqLabels.map((label, i) => (
            <AxisLabel key={label} style={{ left: `${((13 + i * 204.8) / 1508) * 100}%` }}>
              {label}
            </AxisLabel>
          ))}
        </Axis>
        <Waterfall />

        <SliceOverlay />
        <SliceFlag />

        <SideMenu>
          {sideItems.map(([label, size]) => (
            <SideButton key={label} $size={size} $off={label === "DAXIQ"}>
              {label}
              {label === "MEM" && <ArrowIcon />}
            </SideButton>
          ))}
        </SideMenu>

        <BandPopover>
          <PopoverArrow width="27" height="64" viewBox="0 0 27 64" aria-hidden="true">
            <path d="M27 0c-2 8-5 10-10 14L3 27c-4 4-4 6 0 10l14 12c5 4 8 7 10 15z" fill="#c8d1dc" />
          </PopoverArrow>
          <BandGrid>
            {bands.map(band => (
              <BandButton key={band} $active={band === "20"}>
                {band}
              </BandButton>
            ))}
          </BandGrid>
        </BandPopover>

        <PttButton>PTT</PttButton>
      </Panadapter>

      <RightPanel />
    </Main>

    <TabBar>
      <Clock>
        <ClockTime>16:15</ClockTime>
        UTC
      </Clock>
      <Tabs>
        <TabLink href="#panadapter" $active>
          <PanadapterIcon />
          <span>Panadapter</span>
        </TabLink>
        <TabLink href="#flex">
          <RigIcon />
          <span>FLEX-6500 settings</span>
        </TabLink>
        <TabLink href="#cluster">
          <DishIcon />
          <span>DX Cluster</span>
        </TabLink>
        <TabLink href="#settings">
          <GearsIcon />
          <span>Settings</span>
        </TabLink>
      </Tabs>
      <HomeBar />
    </TabBar>
  </Page>
)

export default App
